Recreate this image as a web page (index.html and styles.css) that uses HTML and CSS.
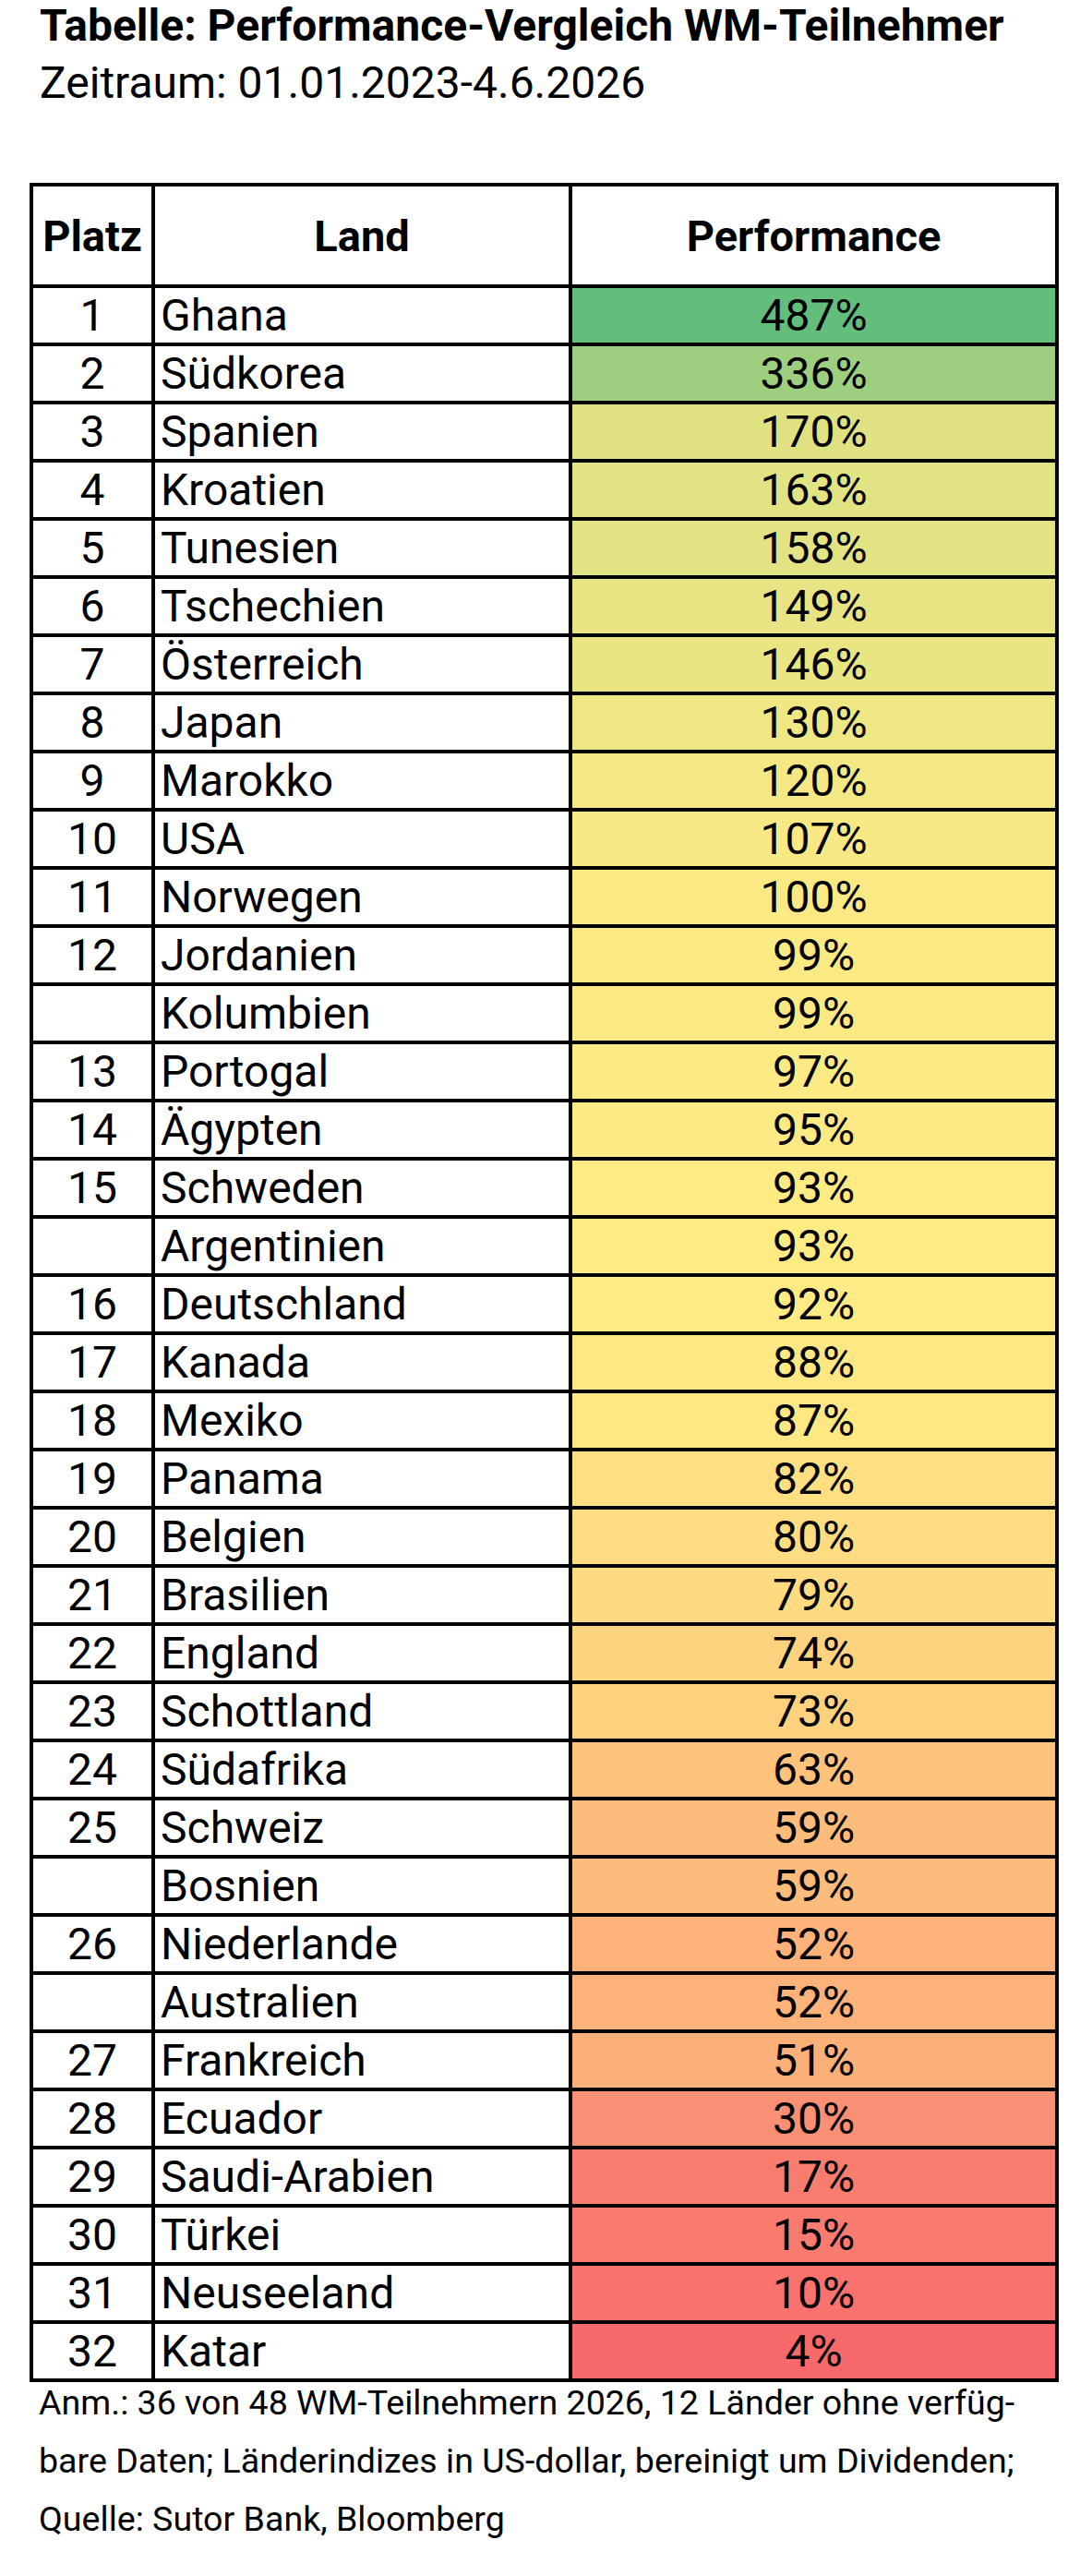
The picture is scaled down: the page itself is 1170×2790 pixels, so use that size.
FILE: index.html
```html
<!DOCTYPE html>
<html lang="de">
<head>
<meta charset="utf-8">
<title>Performance-Vergleich WM-Teilnehmer</title>
<link rel="stylesheet" href="styles.css">
</head>
<body>
<header class="intro">
  <h1 class="title">Tabelle: Performance-Vergleich WM-Teilnehmer</h1>
  <p class="subtitle">Zeitraum: 01.01.2023-4.6.2026</p>
</header>
<div class="table">
  <div class="cell head">Platz</div><div class="cell head">Land</div><div class="cell head">Performance</div>
  <div class="cell rank">1</div><div class="cell land">Ghana</div><div class="cell perf" style="background:#63BE7B">487%</div>
  <div class="cell rank">2</div><div class="cell land">Südkorea</div><div class="cell perf" style="background:#9ECF7E">336%</div>
  <div class="cell rank">3</div><div class="cell land">Spanien</div><div class="cell perf" style="background:#E0E282">170%</div>
  <div class="cell rank">4</div><div class="cell land">Kroatien</div><div class="cell perf" style="background:#E2E382">163%</div>
  <div class="cell rank">5</div><div class="cell land">Tunesien</div><div class="cell perf" style="background:#E4E383">158%</div>
  <div class="cell rank">6</div><div class="cell land">Tschechien</div><div class="cell perf" style="background:#E8E483">149%</div>
  <div class="cell rank">7</div><div class="cell land">Österreich</div><div class="cell perf" style="background:#E9E583">146%</div>
  <div class="cell rank">8</div><div class="cell land">Japan</div><div class="cell perf" style="background:#EFE783">130%</div>
  <div class="cell rank">9</div><div class="cell land">Marokko</div><div class="cell perf" style="background:#F3E883">120%</div>
  <div class="cell rank">10</div><div class="cell land">USA</div><div class="cell perf" style="background:#F8E984">107%</div>
  <div class="cell rank">11</div><div class="cell land">Norwegen</div><div class="cell perf" style="background:#FBEA84">100%</div>
  <div class="cell rank">12</div><div class="cell land">Jordanien</div><div class="cell perf" style="background:#FBEA84">99%</div>
  <div class="cell rank"></div><div class="cell land">Kolumbien</div><div class="cell perf" style="background:#FBEA84">99%</div>
  <div class="cell rank">13</div><div class="cell land">Portogal</div><div class="cell perf" style="background:#FCEA84">97%</div>
  <div class="cell rank">14</div><div class="cell land">Ägypten</div><div class="cell perf" style="background:#FDEA84">95%</div>
  <div class="cell rank">15</div><div class="cell land">Schweden</div><div class="cell perf" style="background:#FEEB84">93%</div>
  <div class="cell rank"></div><div class="cell land">Argentinien</div><div class="cell perf" style="background:#FEEB84">93%</div>
  <div class="cell rank">16</div><div class="cell land">Deutschland</div><div class="cell perf" style="background:#FEEB84">92%</div>
  <div class="cell rank">17</div><div class="cell land">Kanada</div><div class="cell perf" style="background:#FFE883">88%</div>
  <div class="cell rank">18</div><div class="cell land">Mexiko</div><div class="cell perf" style="background:#FFE783">87%</div>
  <div class="cell rank">19</div><div class="cell land">Panama</div><div class="cell perf" style="background:#FEDF82">82%</div>
  <div class="cell rank">20</div><div class="cell land">Belgien</div><div class="cell perf" style="background:#FEDC81">80%</div>
  <div class="cell rank">21</div><div class="cell land">Brasilien</div><div class="cell perf" style="background:#FEDA81">79%</div>
  <div class="cell rank">22</div><div class="cell land">England</div><div class="cell perf" style="background:#FED37F">74%</div>
  <div class="cell rank">23</div><div class="cell land">Schottland</div><div class="cell perf" style="background:#FED17F">73%</div>
  <div class="cell rank">24</div><div class="cell land">Südafrika</div><div class="cell perf" style="background:#FDC27C">63%</div>
  <div class="cell rank">25</div><div class="cell land">Schweiz</div><div class="cell perf" style="background:#FCBC7B">59%</div>
  <div class="cell rank"></div><div class="cell land">Bosnien</div><div class="cell perf" style="background:#FCBC7B">59%</div>
  <div class="cell rank">26</div><div class="cell land">Niederlande</div><div class="cell perf" style="background:#FCB279">52%</div>
  <div class="cell rank"></div><div class="cell land">Australien</div><div class="cell perf" style="background:#FCB279">52%</div>
  <div class="cell rank">27</div><div class="cell land">Frankreich</div><div class="cell perf" style="background:#FCB079">51%</div>
  <div class="cell rank">28</div><div class="cell land">Ecuador</div><div class="cell perf" style="background:#FA9073">30%</div>
  <div class="cell rank">29</div><div class="cell land">Saudi-Arabien</div><div class="cell perf" style="background:#F97D6F">17%</div>
  <div class="cell rank">30</div><div class="cell land">Türkei</div><div class="cell perf" style="background:#F97A6E">15%</div>
  <div class="cell rank">31</div><div class="cell land">Neuseeland</div><div class="cell perf" style="background:#F9726D">10%</div>
  <div class="cell rank">32</div><div class="cell land">Katar</div><div class="cell perf" style="background:#F8696B">4%</div>
</div>
<div class="note">
  <span class="line">Anm.: 36 von 48 WM-Teilnehmern 2026, 12 Länder ohne verfüg-</span>
  <span class="line">bare Daten; Länderindizes in US-dollar, bereinigt um Dividenden;</span>
  <span class="line">Quelle: Sutor Bank, Bloomberg</span>
</div>
</body>
</html>
```

FILE: styles.css
```css
html, body {
  margin: 0;
  padding: 0;
  background: #fff;
}
body {
  font-family: Roboto, "Liberation Sans", sans-serif;
  color: #000;
  width: 1170px;
}
.intro {
  padding-left: 43px;
}
.title {
  margin: -3px 0 0 0;
  font-size: 48px;
  font-weight: 700;
  line-height: 62px;
}
.subtitle {
  margin: 0;
  font-size: 48px;
  font-weight: 400;
  line-height: 62px;
}
.table {
  margin: 77px 0 0 32px;
  display: grid;
  grid-template-columns: 132px 452px 527px;
  grid-template-rows: 110px;
  grid-auto-rows: 63px;
  width: max-content;
  border-top: 4px solid #000;
  border-left: 4px solid #000;
}
.cell {
  box-sizing: border-box;
  border-right: 4px solid #000;
  border-bottom: 4px solid #000;
  display: flex;
  align-items: center;
  font-size: 48px;
  line-height: 1;
  white-space: nowrap;
  background: #fff;
}
.head {
  font-size: 47px;
  font-weight: 700;
  justify-content: center;
}
.rank {
  justify-content: center;
}
.land {
  padding-left: 6px;
}
.perf {
  justify-content: center;
}
.note {
  margin-top: -9px;
  padding-left: 42px;
  font-size: 37.6px;
  line-height: 63px;
}
.line {
  display: block;
  white-space: nowrap;
}
```
